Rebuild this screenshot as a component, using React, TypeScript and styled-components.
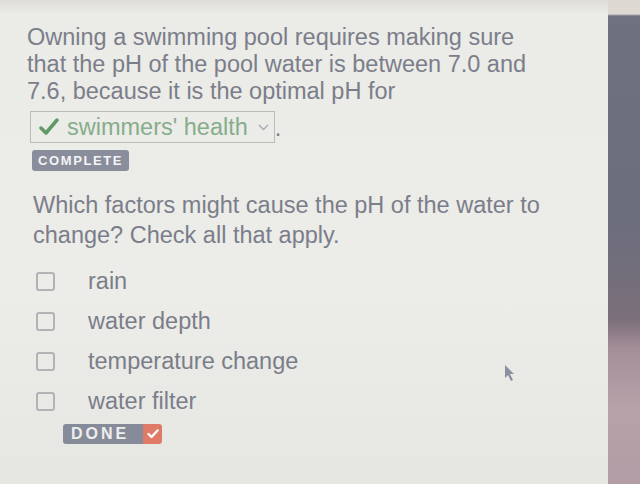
import styled, { createGlobalStyle } from "styled-components"

const GlobalStyle = createGlobalStyle`
  html, body {
    margin: 0;
    padding: 0;
    background: #e6e6e2;
  }
  body {
    font-family: "Liberation Sans", Arial, sans-serif;
  }
`

const Screen = styled.div`
  display: flex;
  width: 640px;
  height: 484px;
  overflow: hidden;
`

const Panel = styled.div`
  position: relative;
  flex: 1;
  padding: 24px 0 0 27px;
  background: linear-gradient(180deg, #dedcd7 0px, #ebebe7 14px, #ecece8 60%, #e6e6e2 100%);
  color: #7b7e8a;
`

const Side = styled.div`
  width: 32px;
  background: linear-gradient(180deg, #ddd9d2 0px, #ddd9d2 14px, #6f7080 16px, #6c6e7d 45%, #7a6f7a 66%, #a48e98 72%, #b8a2aa 85%, #b29ca5 100%);
`

const Passage = styled.p`
  margin: 0;
  width: 520px;
  font-size: 23.5px;
  line-height: 27px;
`

const Dropdown = styled.span`
  display: inline-flex;
  align-items: center;
  gap: 8px;
  height: 30px;
  margin: 6px 0 0 3px;
  padding: 0 5px 0 8px;
  border: 1px solid #b9bcb8;
  color: #86ad8c;
  font-size: 23.5px;
`

const Chevron = styled.span`
  display: flex;
  margin-left: 2px;
`

const Badge = styled.div`
  display: inline-block;
  margin: 7px 0 0 5px;
  padding: 3px 6px 3px;
  background: #8a8d9b;
  border-radius: 3px;
  color: #f4f4f4;
  font-size: 13px;
  font-weight: bold;
  letter-spacing: 1.6px;
`

const Question = styled.p`
  margin: 19px 0 0 6px;
  width: 540px;
  font-size: 23.5px;
  line-height: 30px;
`

const Options = styled.div`
  display: flex;
  flex-direction: column;
  gap: 14px;
  margin: 18px 0 0 9px;
`

const Option = styled.label`
  display: flex;
  align-items: center;
  gap: 33px;
  font-size: 23.5px;
  line-height: 26px;
`

const Box = styled.span`
  width: 15px;
  height: 15px;
  border: 2px solid #b2b3b6;
  border-radius: 3px;
`

const Done = styled.div`
  display: inline-flex;
  align-items: stretch;
  height: 20px;
  margin: 10px 0 0 36px;
  border-radius: 3px;
  overflow: hidden;
`

const DoneLabel = styled.span`
  display: flex;
  align-items: center;
  width: 80px;
  box-sizing: border-box;
  padding-left: 8px;
  background: #868b99;
  color: #eeeeee;
  font-size: 16px;
  font-weight: bold;
  letter-spacing: 3px;
`

const DoneCheck = styled.span`
  display: flex;
  align-items: center;
  justify-content: center;
  width: 19px;
  background: #df7a66;
`

const Cursor = styled.svg`
  position: absolute;
  left: 504px;
  top: 364px;
`

const options = ["rain", "water depth", "temperature change", "water filter"]

export default function App() {
  return (
    <>
      <GlobalStyle />
      <Screen>
        <Panel>
          <Passage>
            Owning a swimming pool requires making sure that the pH of the pool water is between 7.0 and 7.6, because it is the optimal pH for
            <br />
            <Dropdown>
              <svg width="20" height="18" viewBox="0 0 20 18">
                <path d="M2 10 L7 15 L18 2" fill="none" stroke="#5f9a66" strokeWidth="3.5" strokeLinecap="round" strokeLinejoin="round" />
              </svg>
              swimmers' health
              <Chevron>
                <svg width="11" height="7" viewBox="0 0 11 7">
                  <path d="M1 1 L5.5 5.5 L10 1" fill="none" stroke="#a6a9b2" strokeWidth="1.4" />
                </svg>
              </Chevron>
            </Dropdown>
            .
          </Passage>
          <Badge>COMPLETE</Badge>
          <Question>Which factors might cause the pH of the water to change? Check all that apply.</Question>
          <Options>
            {options.map((o) => (
              <Option key={o}>
                <Box />
                {o}
              </Option>
            ))}
          </Options>
          <Done>
            <DoneLabel>DONE</DoneLabel>
            <DoneCheck>
              <svg width="12" height="10" viewBox="0 0 12 10">
                <path d="M1.5 5 L4.5 8 L10.5 1.5" fill="none" stroke="#ffffff" strokeWidth="2.4" strokeLinecap="round" strokeLinejoin="round" />
              </svg>
            </DoneCheck>
          </Done>
          <Cursor width="12" height="18" viewBox="0 0 12 18">
            <path d="M1 1 L1 14 L4 11 L7 17 L9 16 L6 10 L10 10 Z" fill="#8c8fa0" />
          </Cursor>
        </Panel>
        <Side />
      </Screen>
    </>
  )
}
